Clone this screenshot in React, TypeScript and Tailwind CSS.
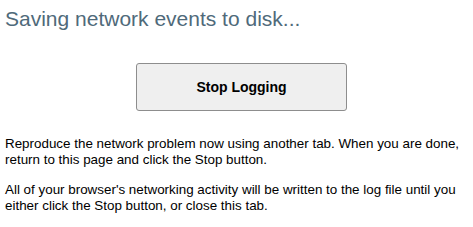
export default function App() {
  return (
    <div className="min-h-screen bg-white pl-[5px] pr-[6px] text-black font-['Liberation_Sans',Arial,sans-serif]">
      <h1 className="pt-[6px] text-[21px] leading-[25px] font-normal text-[#4f6a7a]">
        Saving network events to disk...
      </h1>

      <div className="mt-[32px] flex justify-center pl-[11px]">
        <button
          type="button"
          className="w-[211px] h-[48px] rounded-[3px] border border-[#8d8d8d] bg-[#efefef] text-[14px] font-bold text-black"
        >
          Stop Logging
        </button>
      </div>

      <p className="mt-[25px] text-[13.4px] leading-[16px]">
        Reproduce the network problem now using another tab. When you are done,
        return to this page and click the Stop button.
      </p>
      <p className="mt-[14px] text-[13.4px] leading-[16px]">
        All of your browser's networking activity will be written to the log file until you
        either click the Stop button, or close this tab.
      </p>
    </div>
  );
}
